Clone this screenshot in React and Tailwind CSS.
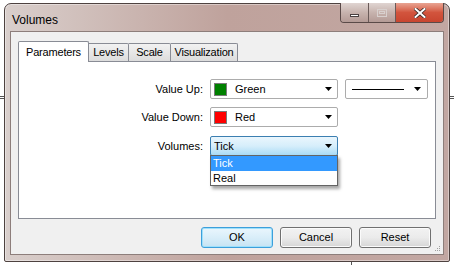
import React from "react";

const Arrow = () => (
  <svg width="7" height="4" viewBox="0 0 7 4" className="block">
    <path d="M0 0H7L3.5 4Z" fill="#000" />
  </svg>
);

function Combo({ swatch, label, width = "w-[128px]" }) {
  return (
    <div className={`${width} h-[20px] flex items-center bg-white border border-[#acacac] rounded-[2px] pl-[3px] pr-[5px]`}>
      {swatch && <div className={`w-[13px] h-[13px] border border-[#7a7a7a] ${swatch}`} />}
      <span className="ml-[8px] flex-1">{label}</span>
      <Arrow />
    </div>
  );
}

function Tab({ children, selected, w }) {
  if (selected) {
    return (
      <div className={`relative z-10 h-[21px] -mb-px ${w} flex items-center justify-center bg-white border border-b-0 border-[#898c95] rounded-t-[2px]`}>
        {children}
      </div>
    );
  }
  return (
    <div className={`h-[18px] ${w} flex items-center justify-center border border-b-0 border-l-0 border-[#898c95] bg-gradient-to-b from-[#f2f2f2] to-[#dcdcdc] rounded-tr-[2px]`}>
      {children}
    </div>
  );
}

function Button({ children, def }) {
  return (
    <div
      className={`w-[72px] h-[21px] flex items-center justify-center rounded-[3px] border ${
        def
          ? "border-[#3c9fdb] shadow-[inset_0_0_0_1px_#9ee0fb] bg-gradient-to-b from-[#eaf6fd] via-[#d9eef9] to-[#c6e3f3]"
          : "border-[#707070] shadow-[inset_0_0_0_1px_#fbfbfb] bg-gradient-to-b from-[#f2f2f2] via-[#ebebeb] to-[#d6d6d6]"
      }`}
    >
      {children}
    </div>
  );
}

export default function App() {
  return (
    <div className="relative w-[454px] h-[265px] bg-white overflow-hidden" style={{ fontFamily: '"Liberation Sans", Arial, sans-serif' }}>
      {/* chart lines behind window */}
      <div className="absolute left-0 top-[96px] w-[6px] h-px bg-[#555]" />
      <div className="absolute left-0 top-[98px] w-[6px] h-px bg-[#555]" />
      <div className="absolute right-0 top-[96px] w-[6px] h-px bg-[#555]" />
      <div className="absolute right-0 top-[98px] w-[6px] h-px bg-[#555]" />
      <div className="absolute left-[351px] top-[258px] w-px h-[7px] bg-[#555]" />

      <div className="relative ml-[4px] mt-[3px] w-[446px] h-[259px] flex flex-col rounded-t-[7px] rounded-b-[2px] border border-[#4e4240] bg-gradient-to-r from-[#d9cfcc] via-[#bfa29c] to-[#c2a7a2] shadow-[0_0_0_1px_rgba(255,255,255,0.4)_inset]">
        {/* title bar */}
        <div className="h-[27px] flex items-start">
          <div className="pl-[7px] pt-[7px] text-[12px] text-black">Volumes</div>
          <div className="ml-auto mr-[5px] flex h-[20px] -mt-px rounded-b-[4px] border border-t-0 border-[#5a4a48] overflow-hidden">
            <div className="w-[28px] flex items-center justify-center border-r border-[#6a5a58] bg-gradient-to-b from-[#e0d5d2] via-[#c7b3ae] to-[#b49b96]">
              <div className="w-[9px] h-[3px] mt-[6px] bg-white border border-[#4a4040]" />
            </div>
            <div className="w-[27px] flex items-center justify-center border-r border-[#6a5a58] bg-gradient-to-b from-[#e0d5d2] via-[#c7b3ae] to-[#b49b96]">
              <div className="w-[10px] h-[8px] border border-[#d8d0ce] flex items-center justify-center">
                <div className="w-[6px] h-[3px] border border-[#d8d0ce]" />
              </div>
            </div>
            <div className="w-[47px] flex items-center justify-center bg-gradient-to-b from-[#e8a493] via-[#d2543d] to-[#c8452f]">
              <svg width="12" height="10" viewBox="0 0 12 10">
                <path d="M1.5 1L10.5 9M10.5 1L1.5 9" stroke="#3a2a28" strokeWidth="3.6" strokeLinecap="square" />
                <path d="M1.5 1L10.5 9M10.5 1L1.5 9" stroke="#fff" strokeWidth="2" strokeLinecap="square" />
              </svg>
            </div>
          </div>
        </div>

        {/* client */}
        <div className="relative mx-[5px] w-[434px] h-[224px] border border-[#8d7e7b] bg-[#f0f0f0] text-[11px] text-black flex flex-col">
          <div className="pl-[7px] pt-[8px] pr-[7px]">
            <div className="flex items-end h-[21px] tracking-[-0.2px]">
              <Tab selected w="w-[71px]">Parameters</Tab>
              <Tab w="w-[40px]">Levels</Tab>
              <Tab w="w-[42px]">Scale</Tab>
              <Tab w="w-[67px]">Visualization</Tab>
            </div>
            <div className="relative w-[418px] h-[158px] bg-white border border-[#898c95]">
              <div className="pt-[17px] pl-[191px] flex flex-col gap-[8px]">
                <div className="flex items-center">
                  <span className="absolute right-[232px]">Value Up:</span>
                  <Combo swatch="bg-[#008000]" label="Green" />
                  <div className="ml-[7px] w-[83px] h-[20px] flex items-center bg-white border border-[#acacac] rounded-[2px] pl-[6px] pr-[6px]">
                    <div className="w-[52px] h-px bg-black" />
                    <div className="ml-auto"><Arrow /></div>
                  </div>
                </div>
                <div className="flex items-center">
                  <span className="absolute right-[232px]">Value Down:</span>
                  <Combo swatch="bg-[#ff0000]" label="Red" />
                </div>
                <div className="flex items-center mt-px">
                  <span className="absolute right-[232px]">Volumes:</span>
                  <div className="w-[128px] h-[20px] flex items-center rounded-[2px] border border-[#3c7fb1] bg-gradient-to-b from-[#eaf6fd] via-[#d6eefb] to-[#a9dbf6] pl-[3px] pr-[5px]">
                    <span className="flex-1">Tick</span>
                    <Arrow />
                  </div>
                </div>
              </div>
              {/* dropdown list */}
              <div className="absolute left-[191px] top-[93px] w-[128px] bg-white border border-[#646464] shadow-[2px_3px_3px_rgba(0,0,0,0.35)]">
                <div className="h-[15px] pl-[2px] flex items-center bg-[#3399ff] text-white">Tick</div>
                <div className="h-[14px] pl-[2px] flex items-center">Real</div>
              </div>
            </div>
          </div>
          <div className="flex justify-end gap-[7px] pr-[12px] mt-[8px]">
            <Button def>OK</Button>
            <Button>Cancel</Button>
            <Button>Reset</Button>
          </div>
          {/* grip */}
          <div className="absolute right-[3px] bottom-[3px] grid grid-cols-3 gap-[1px]">
            <div />
            <div />
            <div className="w-[1px] h-[1px] bg-[#a0a0a0]" />
            <div />
            <div className="w-[1px] h-[1px] bg-[#a0a0a0]" />
            <div className="w-[1px] h-[1px] bg-[#a0a0a0]" />
            <div className="w-[1px] h-[1px] bg-[#a0a0a0]" />
            <div className="w-[1px] h-[1px] bg-[#a0a0a0]" />
            <div className="w-[1px] h-[1px] bg-[#a0a0a0]" />
          </div>
        </div>
      </div>
    </div>
  );
}
